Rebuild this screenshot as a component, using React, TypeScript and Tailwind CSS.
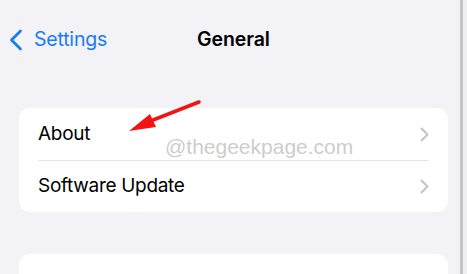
const rows = ["About", "Software Update"];

const Chevron = ({ left }: { left?: boolean }) =>
    left ? (
        <svg width="14" height="22" viewBox="0 0 14 22" fill="none">
            <path d="M11.5 2 L2.5 11 L11.5 20" stroke="currentColor" strokeWidth="2.8" strokeLinecap="round" strokeLinejoin="round" />
        </svg>
    ) : (
        <svg width="9" height="15" viewBox="0 0 9 15" fill="none">
            <path d="M1.5 1.5 L7.5 7.5 L1.5 13.5" stroke="currentColor" strokeWidth="2" strokeLinecap="round" strokeLinejoin="round" />
        </svg>
    );

const App = () => (
    <div className="relative grid grid-cols-[460px_3px_4px] w-[467px] h-[274px] overflow-hidden bg-[#f2f2f7] font-['Inter','Liberation_Sans',sans-serif]">
        <div className="flex flex-col h-[274px] overflow-hidden">
            <div className="relative shrink-0 flex items-center h-[80px]">
                <div className="flex items-center text-[#1a7cf5] pl-[9px]">
                    <Chevron left />
                    <span className="ml-[11px] text-[19.5px] tracking-[-0.2px]">Settings</span>
                </div>
                <span className="absolute left-[197px] text-[19.5px] font-semibold text-black tracking-[-0.1px]">General</span>
            </div>

            <div className="shrink-0 mt-[28px] ml-[19px] w-[429px] bg-white rounded-[11px]">
                {rows.map((r, i) => (
                    <div key={r} className="flex items-center h-[52px] pl-[19px] pr-[19px]">
                        <div className={"flex-1 flex items-center h-full text-[#c4c4c7] " + (i > 0 ? "border-t border-[#e3e3e8]" : "")}>
                            <span className="flex-1 text-[19px] text-black tracking-[-0.3px]">{r}</span>
                            <Chevron />
                        </div>
                    </div>
                ))}
            </div>

            <div className="shrink-0 mt-[42px] ml-[19px] w-[429px] h-[40px] bg-white rounded-t-[11px]" />
        </div>

        <div className="bg-[#c4c4c8]" />
        <div className="bg-[#f0f0f2]" />

        <span className="absolute left-[165px] top-[131px] text-[21px] text-[#cdcdcd] font-['Liberation_Sans',sans-serif]">@thegeekpage.com</span>

        <svg className="absolute left-0 top-0" width="467" height="274">
            <line x1="199" y1="102" x2="148" y2="122" stroke="#f21414" strokeWidth="3.5" strokeLinecap="round" />
            <polygon points="129,131 150,114 156,127" fill="#f21414" />
        </svg>
    </div>
);

export default App;
